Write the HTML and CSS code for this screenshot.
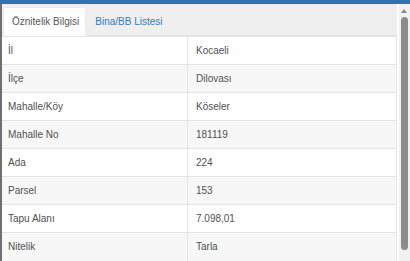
FILE: index.html
```html
<!DOCTYPE html>
<html lang="tr">
<head>
<meta charset="utf-8">
<link rel="stylesheet" href="styles.css">
</head>
<body>
<div class="topbar"></div>
<div class="panel">
  <div class="content">
    <div class="tabs">
      <div class="tab active">Öznitelik Bilgisi</div>
      <div class="tab">Bina/BB Listesi</div>
    </div>
    <table class="attrs">
      <tr><td class="k">İl</td><td class="v">Kocaeli</td></tr>
      <tr><td class="k">İlçe</td><td class="v">Dilovası</td></tr>
      <tr><td class="k">Mahalle/Köy</td><td class="v">Köseler</td></tr>
      <tr><td class="k">Mahalle No</td><td class="v">181119</td></tr>
      <tr><td class="k">Ada</td><td class="v">224</td></tr>
      <tr><td class="k">Parsel</td><td class="v">153</td></tr>
      <tr><td class="k">Tapu Alanı</td><td class="v">7.098,01</td></tr>
      <tr><td class="k">Nitelik</td><td class="v">Tarla</td></tr>
    </table>
  </div>
  <div class="scrollbar">
    <div class="arrow"></div>
    <div class="thumb"></div>
  </div>
</div>
</body>
</html>
```
FILE: styles.css
```css
html, body {
  margin: 0;
  padding: 0;
  width: 410px;
  height: 261px;
  overflow: hidden;
  background: #fff;
  font-family: "Liberation Sans", Arial, sans-serif;
  font-size: 10px;
  color: #505050;
}
.topbar {
  height: 4px;
  background: #2f73b4;
}
.panel {
  display: flex;
  height: 257px;
  border-left: 2px solid #707070;
  box-sizing: border-box;
}
.content {
  flex: 1;
  display: flex;
  flex-direction: column;
  min-width: 0;
  padding-right: 2px;
}
.tabs {
  height: 32px;
  background: #efefef;
  border-top: 1px solid #f3e6e6;
  box-sizing: border-box;
  display: flex;
  align-items: flex-end;
  padding-left: 1px;
  border-bottom: 1px solid #e2e2e2;
}
.tab {
  height: 29px;
  line-height: 29px;
  padding: 0 8px 0 9px;
  color: #337ab7;
  margin-bottom: -1px;
}
.tab.active {
  background: #fff;
  color: #555;
  border: 1px solid #ebebeb;
  border-bottom-color: #fff;
  box-sizing: border-box;
  line-height: 28px;
  padding: 0 6px 0 8px;
}
.attrs {
  border-collapse: collapse;
  width: 100%;
  table-layout: fixed;
  border-right: 1px solid #e6e6e6;
}
.attrs tr {
  height: 28px;
}
.attrs tr:nth-child(even) {
  background: #f7f7f7;
}
.attrs td {
  border-top: 1px solid #e4e4e4;
  padding: 0;
  vertical-align: middle;
  line-height: 27px;
}
.attrs td.k {
  width: 179px;
  padding-left: 6px;
  border-right: 1px solid #e4e4e4;
}
.attrs td.v {
  padding-left: 8px;
}
.scrollbar {
  width: 11px;
  background: #f1f1f1;
  position: relative;
  flex: none;
}
.arrow {
  position: absolute;
  left: 2px;
  top: 5px;
  width: 0;
  height: 0;
  border-left: 3.5px solid transparent;
  border-right: 3.5px solid transparent;
  border-bottom: 4px solid #8a8a8a;
}
.thumb {
  position: absolute;
  left: 2px;
  top: 13px;
  width: 7px;
  height: 233px;
  background: #8c8c8c;
  border-radius: 4px;
}
```
